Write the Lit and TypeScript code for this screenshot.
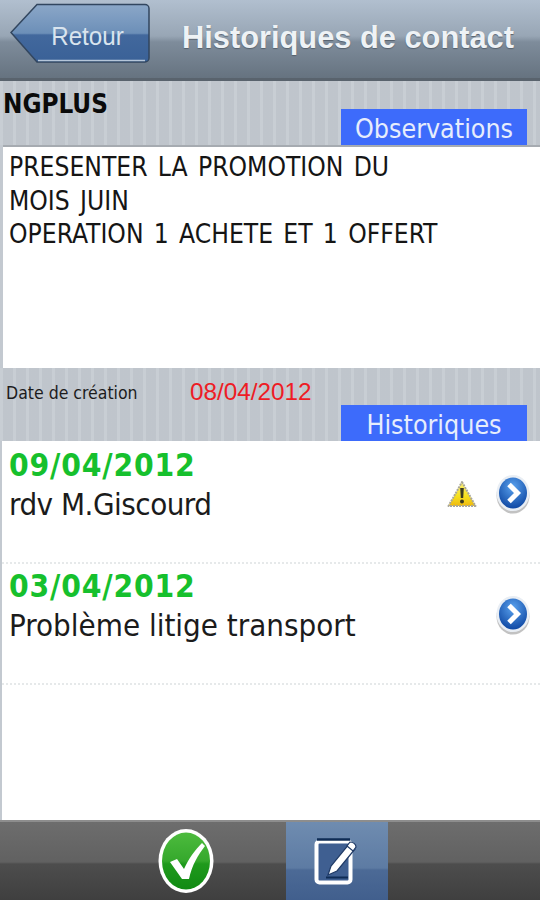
import { LitElement, html, css, svg } from "lit";
import { customElement } from "lit/decorators.js";

const chevron = html`<svg class="go" viewBox="0 0 34 40" width="34" height="40">
  <defs>
    <radialGradient id="gb" cx="50%" cy="30%" r="70%"><stop offset="0" stop-color="#5aa2ee"/><stop offset="1" stop-color="#1049a4"/></radialGradient>
  </defs>
  <ellipse cx="17" cy="21.500" rx="16.500" ry="18" fill="#8f8f8f" opacity=".55"/>
  <ellipse cx="17" cy="19" rx="16.500" ry="18" fill="#e9eef4"/>
  <ellipse cx="17" cy="19" rx="14" ry="15.500" fill="url(#gb)"/>
  <path d="M13 10.500l8.500 8.500-8.500 8.500" fill="none" stroke="#fff" stroke-width="5"/>
</svg>`;

const warn = html`<svg class="warn" viewBox="0 0 30 28" width="30" height="28">
  <defs><linearGradient id="wy" x1="0" y1="0" x2="0" y2="1"><stop offset="0" stop-color="#fbf07a"/><stop offset=".6" stop-color="#f6e01c"/><stop offset="1" stop-color="#eeb811"/></linearGradient></defs>
  <path d="M15 2L28.500 26H1.500Z" fill="url(#wy)" stroke="#a9a79a" stroke-width="2" stroke-dasharray="2 1" stroke-linejoin="round"/>
  <path d="M13.200 8h3.600l-.6 10h-2.400z" fill="#3a3a20"/><circle cx="15" cy="21.600" r="2" fill="#3a3a20"/>
</svg>`;

const check = svg`<svg viewBox="0 0 58 66" width="58" height="66">
  <defs>
    <linearGradient id="gg" x1="0" y1="0" x2="0" y2="1"><stop offset="0" stop-color="#4dbb3e"/><stop offset=".5" stop-color="#35a82c"/><stop offset=".55" stop-color="#1f9a1c"/><stop offset="1" stop-color="#118a13"/></linearGradient>
  </defs>
  <ellipse cx="29" cy="33" rx="27.500" ry="32" fill="#fff"/>
  <ellipse cx="29" cy="33" rx="24" ry="28.500" fill="url(#gg)"/>
  <path d="M13 34l7-3 7 10C32 30 38 22 45 15l3 3c-7 9-13 19-16 33h-7z" fill="#fff"/>
</svg>`;

const note = svg`<svg viewBox="0 0 46 50" width="46" height="50">
  <rect x="2.500" y="5.500" width="34" height="41" rx="3" fill="#3f5f91" stroke="#fff" stroke-width="4"/>
  <path d="M3 3.500h33" stroke="#0f2c55" stroke-width="2.500"/>
  <path d="M14 39l3-9 18-22 6 5-18 22z" fill="#fff" stroke="#1f3a66" stroke-width="1.200"/>
  <path d="M33 10l6 5 3-4c0-3-3-5-6-5z" fill="#fff" stroke="#1f3a66" stroke-width="1.200"/>
  <path d="M12 41.500h22" stroke="#0f2c55" stroke-width="2"/>
</svg>`;

@customElement("app-root")
export class AppRoot extends LitElement {
  static styles = css`
    :host { display: block; width: 540px; height: 900px; font-family: "DejaVu Sans Condensed", "DejaVu Sans", sans-serif; overflow: hidden; }
    .page { display: flex; flex-direction: column; height: 900px; background: #c3c9d0; }
    .header { height: 81px; flex: none; display: flex; align-items: flex-start; box-sizing: border-box; padding: 3px 0 0 10px;
      background: linear-gradient(#b1bfcf 0, #98a6b5 36px, #7e8c9b 42px, #667380 78px);
      border-bottom: 3px solid #59636d; }
    .back { width: 140px; height: 60px; flex: none; position: relative; display: flex; align-items: center; justify-content: center; }
    .back svg { position: absolute; inset: 0; }
    .back span { position: relative; font: 26px "Liberation Sans", sans-serif; color: #d9e4ee; padding-left: 16px; transform: scaleX(.93); margin-top: 7px; }
    .title { flex: 1; padding: 16px 0 0 32px; font: bold 30.800px/38px "Liberation Sans", sans-serif; color: #eef2f5; white-space: nowrap;
      text-shadow: 0 1px 1px #55606c; }
    .stripes { background-color: #c3c9d0; background-image: repeating-linear-gradient(90deg, rgba(255,255,255,.09) 0 3px, rgba(0,0,0,.02) 3px 13px); }
    .top { height: 64px; flex: none; box-sizing: border-box; display: flex; justify-content: space-between; align-items: flex-end; padding: 0 13px 0 4px; }
    .name { font: bold 25.800px "DejaVu Sans Condensed", sans-serif; color: #0a0a0a; align-self: flex-start; margin-top: 8px; margin-left: -1px; line-height: 30px; }
    .tab { background: #3d6bfb; color: #e6edfc; text-align: center; font-size: 26.600px; line-height: 39px; height: 36px; width: 186px; overflow: hidden; }
    .obs { flex: none; height: 223px; margin-left: 3px; box-sizing: border-box; padding: 4px 6px; background: #fff; border-top: 2px solid #a6abb1; font-size: 26.200px; word-spacing: 2.800px; line-height: 33.500px; color: #151515; }
    .mid { height: 73px; flex: none; display: flex; justify-content: space-between; align-items: flex-end; padding: 0 13px 0 6px; box-sizing: border-box; }
    .dates { display: flex; align-self: flex-start; align-items: center; margin-top: 9px; height: 30px; }
    .label { font: 17.500px "DejaVu Sans Condensed", sans-serif; color: #1c1c1c; width: 184px; padding-top: 2px; }
    .red { font: 24.300px "Liberation Sans", sans-serif; color: #ee1c25; }
    .list { flex: 1; background: #fff; margin-left: 2px; padding-top: 2px; }
    .row { height: 121px; box-sizing: border-box; border-bottom: 2px dotted #e6e9ea; padding: 3px 9px 0 7px; display: flex; align-items: flex-start; }
    .text { flex: 1; }
    .date { font: bold 31.500px/38px "DejaVu Sans Condensed", "DejaVu Sans", sans-serif; color: #16c02d; letter-spacing: .8px; }
    .sub { font-size: 31px; line-height: 41px; color: #1b1b1b; }
    .tight { letter-spacing: -.5px; }
    .icons { display: flex; align-items: center; gap: 19px; margin-top: 28px; margin-right: 1px; }
    .footer { height: 80px; flex: none; display: flex; gap: 49px; padding-left: 135px; border-top: 2px solid #8d8d8d; box-sizing: border-box;
      background: linear-gradient(#6d6d6d 0, #616161 40px, #4d4d4d 42px, #3f3f3f 78px); }
    .fbtn { width: 102px; display: flex; align-items: center; justify-content: center; }
    .on { background: linear-gradient(#6f8cb0 0, #5d7ba3 46px, #4c6a96 48px, #415f8d 78px); }
  `;

  render() {
    return html`<div class="page">
      <div class="header">
        <div class="back">
          <svg viewBox="0 0 140 60" width="140" height="60">
            <defs><linearGradient id="bk" x1="0" y1="0" x2="0" y2="1">
              <stop offset="0" stop-color="#8ba7c8"/><stop offset=".5" stop-color="#6c8fb8"/><stop offset=".53" stop-color="#42689d"/><stop offset="1" stop-color="#3a6197"/>
            </linearGradient></defs>
            <path d="M27 1.500H135a4 4 0 0 1 4 4V55a4 4 0 0 1-4 4H27L1 29.500Z" fill="url(#bk)" stroke="#32465f" stroke-width="1.500"/>
            <path d="M28 57.500H135" stroke="#b5c6d9" stroke-width="1.500"/>
          </svg>
          <span>Retour</span>
        </div>
        <div class="title">Historiques de contact</div>
      </div>
      <div class="top stripes">
        <div class="name">NGPLUS</div>
        <div class="tab">Observations</div>
      </div>
      <div class="obs">PRESENTER LA PROMOTION DU<br>MOIS JUIN<br>OPERATION 1 ACHETE ET 1 OFFERT</div>
      <div class="mid stripes">
        <div class="dates"><span class="label">Date de création</span><span class="red">08/04/2012</span></div>
        <div class="tab">Historiques</div>
      </div>
      <div class="list">
        <div class="row">
          <div class="text"><div class="date">09/04/2012</div><div class="sub tight">rdv M.Giscourd</div></div>
          <div class="icons">${warn}${chevron}</div>
        </div>
        <div class="row">
          <div class="text"><div class="date">03/04/2012</div><div class="sub">Problème litige transport</div></div>
          <div class="icons">${chevron}</div>
        </div>
      </div>
      <div class="footer">
        <div class="fbtn">${check}</div>
        <div class="fbtn on">${note}</div>
      </div>
    </div>`;
  }
}
